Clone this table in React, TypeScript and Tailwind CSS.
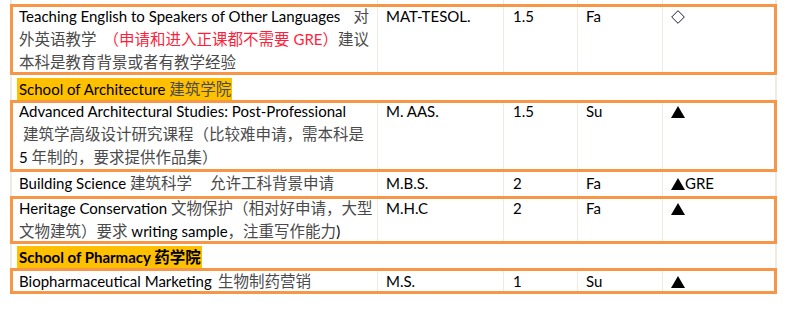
import React from "react";

const Zh = ({ children, className = "" }: { children: React.ReactNode; className?: string }) => (
  <span className={`text-[15.5px] text-[#4a4a4a] ${className}`}>{children}</span>
);

const Tri = () => (
  <svg width="14" height="12" viewBox="0 0 14 12" className="inline-block align-[-1px]">
    <polygon points="0,12 7,0 14,12" fill="#000" />
  </svg>
);

const Diamond = () => (
  <svg width="14" height="14" viewBox="0 0 14 14" className="inline-block align-[-2px]">
    <polygon points="7,0.7 13.3,7 7,13.3 0.7,7" fill="none" stroke="#1a1a40" strokeWidth="1" />
  </svg>
);

type RowProps = {
  orange?: boolean;
  h: string;
  pt: string;
  c1: React.ReactNode;
  c2?: React.ReactNode;
  c3?: React.ReactNode;
  c4?: React.ReactNode;
  c5?: React.ReactNode;
};

function Row({ orange, h, pt, c1, c2, c3, c4, c5 }: RowProps) {
  return (
    <div
      className={`flex ${h} border-x-2 border-[#eeece1] ${
        orange ? "[outline:3px_solid_#f79646] [outline-offset:-3px] relative z-10" : ""
      }`}
    >
      <div className={`w-[365px] shrink-0 pl-[7px] pr-[8px] ${pt}`}>{c1}</div>
      <div className={`w-[126px] shrink-0 border-l border-[#eeece1] pl-[8px] ${pt}`}>{c2}</div>
      <div className={`w-[74px] shrink-0 border-l border-[#eeece1] pl-[9px] ${pt}`}>{c3}</div>
      <div className={`w-[85px] shrink-0 border-l border-[#eeece1] pl-[8px] ${pt}`}>{c4}</div>
      <div className={`flex-1 border-l border-[#eeece1] pl-[8px] ${pt}`}>{c5}</div>
    </div>
  );
}

function Header({ children, bold }: { children: React.ReactNode; bold?: boolean }) {
  return (
    <div className="flex h-[24px] border-x-2 border-[#eeece1]">
      <div className="pl-[5px] pt-[2px]">
        <span
          className={`inline-block h-[22px] bg-[#ffc000] pl-[2px] pr-[1px] leading-[22px] whitespace-nowrap ${
            bold ? "font-bold" : ""
          }`}
        >
          {children}
        </span>
      </div>
    </div>
  );
}

export default function App() {
  return (
    <div
      className="w-[808px] h-[314px] overflow-hidden bg-white pl-[10px] text-[15px] leading-[23px] text-black"
      style={{ fontFamily: 'Lato, "Noto Sans CJK SC", sans-serif' }}
    >
      <div className="w-[767px] flex flex-col">
        <div className="flex h-[4px] border-x-2 border-[#eeece1]">
          <div className="w-[365px] shrink-0" />
          <div className="w-[126px] shrink-0 border-l border-[#eeece1]" />
          <div className="w-[74px] shrink-0 border-l border-[#eeece1]" />
          <div className="w-[85px] shrink-0 border-l border-[#eeece1]" />
          <div className="flex-1 border-l border-[#eeece1]" />
        </div>

        <Row
          orange
          h="h-[71px]"
          pt="pt-[1px]"
          c1={
            <div className="whitespace-nowrap">
              <div className="flex justify-between">
                <span>Teaching English to Speakers of Other Languages</span>
                <Zh>对</Zh>
              </div>
              <div className="flex justify-between">
                <Zh>外英语教学</Zh>
                <span className="text-[#ff1f3d]">
                  <span className="text-[15.5px]">（申请和进入正课都不需要</span> GRE
                  <span className="text-[15.5px]">）</span>
                  <Zh>建议</Zh>
                </span>
              </div>
              <div>
                <Zh>本科是教育背景或者有教学经验</Zh>
              </div>
            </div>
          }
          c2="MAT-TESOL."
          c3="1.5"
          c4="Fa"
          c5={<Diamond />}
        />

        <div className="h-[1px]" />
        <Header>
          School of Architecture <Zh>建筑学院</Zh>
        </Header>

        <Row
          orange
          h="h-[72px]"
          pt="pt-[0px]"
          c1={
            <div className="whitespace-nowrap">
              <div>Advanced Architectural Studies: Post-Professional</div>
              <div className="pl-[4px]">
                <Zh>建筑学高级设计研究课程（比较难申请，需本科是</Zh>
              </div>
              <div>
                5 <Zh>年制的，要求提供作品集）</Zh>
              </div>
            </div>
          }
          c2="M. AAS."
          c3="1.5"
          c4="Su"
          c5={<Tri />}
        />

        <Row
          h="h-[24px]"
          pt="pt-[0px]"
          c1={
            <div className="flex whitespace-nowrap">
              <span className="w-[111px] shrink-0">Building Science</span>
              <span className="w-[80px] shrink-0">
                <Zh>建筑科学</Zh>
              </span>
              <Zh>允许工科背景申请</Zh>
            </div>
          }
          c2="M.B.S."
          c3="2"
          c4="Fa"
          c5={
            <span>
              <Tri />
              GRE
            </span>
          }
        />

        <Row
          orange
          h="h-[48px]"
          pt="pt-[1px]"
          c1={
            <div className="whitespace-nowrap">
              <div className="flex justify-between">
                <span>
                  Heritage Conservation <Zh>文物保护</Zh>
                </span>
                <Zh>（相对好申请，大型</Zh>
              </div>
              <div>
                <Zh>文物建筑）要求</Zh> writing sample<Zh>，注重写作能力</Zh>)
              </div>
            </div>
          }
          c2="M.H.C"
          c3="2"
          c4="Fa"
          c5={<Tri />}
        />

        <Header bold>
          School of Pharmacy <span className="text-[15.5px]">药学院</span>
        </Header>

        <Row
          orange
          h="h-[26px]"
          pt="pt-[2px]"
          c1={
            <div className="flex whitespace-nowrap">
              <span className="w-[199px] shrink-0">Biopharmaceutical Marketing</span>
              <Zh>生物制药营销</Zh>
            </div>
          }
          c2="M.S."
          c3="1"
          c4="Su"
          c5={<Tri />}
        />
      </div>
    </div>
  );
}
